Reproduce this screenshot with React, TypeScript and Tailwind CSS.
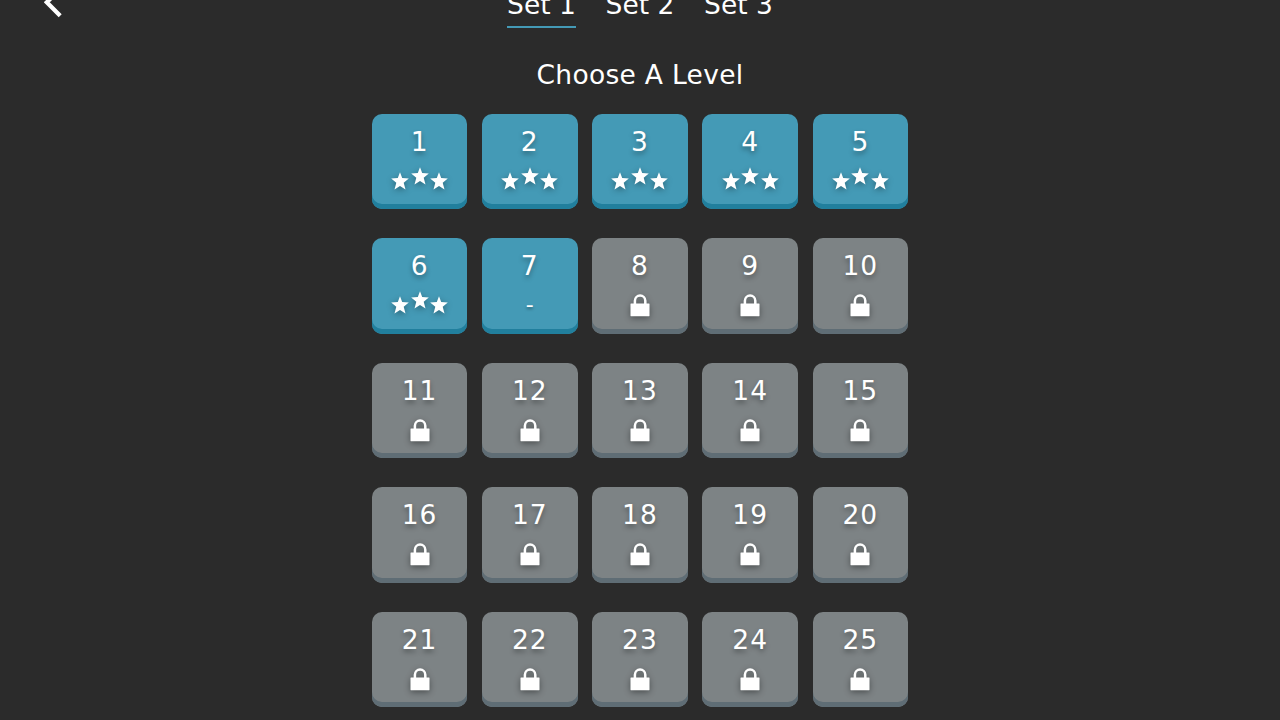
const SETS = ["Set 1", "Set 2", "Set 3"];
const LEVELS = Array.from({ length: 25 }, (_, i) => i + 1);
const CURRENT_LEVEL = 7;

function Star({ className }: { className: string }) {
  return (
    <svg viewBox="0 0 18 18" className={`h-[18px] w-[18px] fill-white ${className}`}>
      <path d="M9 0.2L11.2 6.1L17.8 6.6L12.7 10.8L14.5 17.5L9 13.9L3.5 17.5L5.3 10.8L0.2 6.6L6.8 6.1Z" />
    </svg>
  );
}

function Stars() {
  return (
    <div className="flex h-[23px] gap-[1.5px] drop-shadow-[0_2px_3px_rgba(0,0,0,0.35)]">
      <Star className="mt-[5px]" />
      <Star className="" />
      <Star className="mt-[5px]" />
    </div>
  );
}

function Lock() {
  return (
    <svg viewBox="0 0 20 23" className="mt-[3px] h-[23px] w-5 drop-shadow-[0_2px_3px_rgba(0,0,0,0.4)]">
      <path d="M4.9 11V6.7a5.2 5.2 0 0 1 10.4 0V11" fill="none" stroke="white" strokeWidth="2.5" />
      <rect x="0.5" y="9.6" width="19" height="12.6" rx="0.4" fill="white" />
    </svg>
  );
}

function LevelButton({ level }: { level: number }) {
  const locked = level > CURRENT_LEVEL;

  return (
    <button
      type="button"
      disabled={locked}
      className={`flex h-[95.5px] w-[95.5px] flex-col items-center rounded-[10px] ${
        locked
          ? "bg-[#7d8385] shadow-[inset_0_-5px_0_#5f6d75]"
          : "bg-[#449ab6] shadow-[inset_0_-5px_0_#217f9d]"
      }`}
    >
      <span className="mt-2.5 h-9 text-[26.5px] leading-9 tracking-[1px] [text-shadow:0_3px_5px_rgba(0,0,0,0.35)]">
        {level}
      </span>
      <span className="mt-[7px] flex h-7 justify-center">
        {locked && <Lock />}
        {level < CURRENT_LEVEL && <Stars />}
        {level === CURRENT_LEVEL && (
          <span className="text-[22px] leading-7 [text-shadow:0_2px_3px_rgba(0,0,0,0.4)]">-</span>
        )}
      </span>
    </button>
  );
}

export default function App() {
  return (
    <main className="h-[720px] w-[1280px] overflow-hidden bg-[#2b2b2b] font-['DejaVu_Sans',sans-serif] text-white">
      <header className="grid h-[29px] grid-cols-[1fr_auto_1fr] items-start overflow-hidden">
        <button type="button" className="ml-11 h-[28px] w-5" aria-label="Back">
          <svg viewBox="0 0 20 28" className="h-[28px] w-5">
            <path d="M16.2 -11L2.8 2.3L16.2 15.8" fill="none" stroke="white" strokeWidth="4.2" />
          </svg>
        </button>
        <nav className="-mt-[17px] flex gap-[29.5px]">
          {SETS.map((name, i) => (
            <span
              key={name}
              className={`flex h-[45px] w-[69px] justify-center border-b-2 text-[26.5px] leading-[44px] whitespace-nowrap ${
                i === 0 ? "border-[#449ab6]" : "border-transparent"
              }`}
            >
              {name}
            </span>
          ))}
        </nav>
      </header>
      <h1 className="mt-7 h-9 text-center text-[26.5px] leading-9 tracking-[0.3px]">Choose A Level</h1>
      <section className="mx-auto mt-[20.5px] grid w-[536.3px] grid-cols-[repeat(5,95.5px)] justify-between gap-y-[29px]">
        {LEVELS.map((level) => (
          <LevelButton key={level} level={level} />
        ))}
      </section>
    </main>
  );
}
